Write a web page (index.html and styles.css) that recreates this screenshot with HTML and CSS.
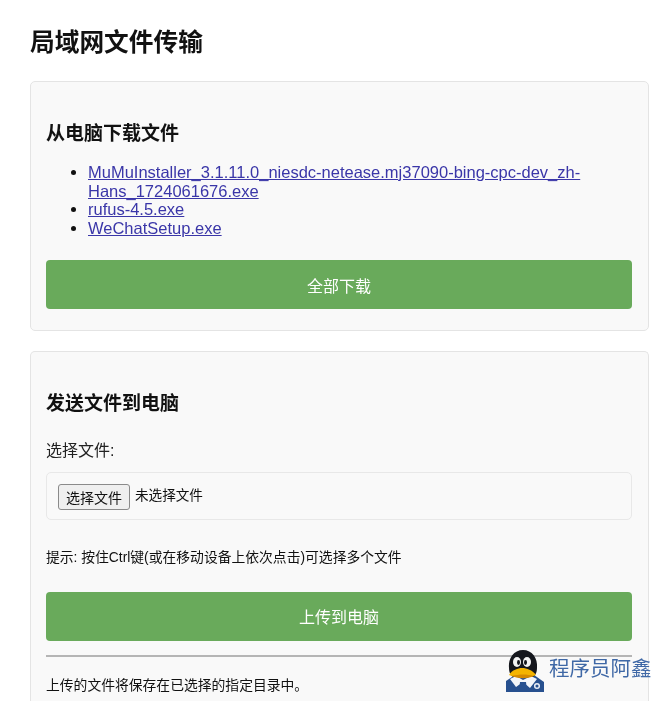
FILE: index.html
```html
<!DOCTYPE html>
<html>
<head>
    <meta charset="utf-8">
    <title>局域网文件传输</title>
    <link rel="stylesheet" href="styles.css">
</head>
<body>
    <h1 class="pageTitle">局域网文件传输</h1>

    <div class="card downloadCard">
        <h2>从电脑下载文件</h2>
        <ul class="fileList">
            <li><a href="#">MuMuInstaller_3.1.11.0_niesdc-netease.mj37090-bing-cpc-dev_zh-Hans_1724061676.exe</a></li>
            <li><a href="#">rufus-4.5.exe</a></li>
            <li><a href="#">WeChatSetup.exe</a></li>
        </ul>
        <button class="bigButton">全部下载</button>
    </div>

    <div class="card uploadCard">
        <h2>发送文件到电脑</h2>
        <label class="fileLabel">选择文件:</label>
        <div class="fileBox">
            <button class="fileButton">选择文件</button>
            <span class="fileStatus">未选择文件</span>
        </div>
        <p class="hint">提示: 按住Ctrl键(或在移动设备上依次点击)可选择多个文件</p>
        <button class="bigButton">上传到电脑</button>
        <hr class="divider">
        <p class="note">上传的文件将保存在已选择的指定目录中。</p>
    </div>

    <!-- watermark sits over the page -->
    <div class="watermark">
        <svg class="penguin" width="38" height="42" viewBox="0 0 38 42">
            <path d="M0 42V31L9 25H28L38 32V42Z" fill="#27508f"/>
            <path d="M3 18C2 8 8 0 17 0C26 0 32 8 31 18C31 24 28 27 25 28H9C6 27 3 24 3 18Z" fill="#15171d"/>
            <path d="M4 29L10 26L17 30L25 26L31 29L24 38L17 32L10 37Z" fill="#f3f5f9"/>
            <path d="M14 32H20L21 42H13Z" fill="#27508f"/>
            <ellipse cx="11" cy="12" rx="4" ry="5" fill="#f4f4f4"/>
            <ellipse cx="21" cy="12" rx="4" ry="5" fill="#f4f4f4"/>
            <ellipse cx="12.500" cy="12.500" rx="1.500" ry="2.400" fill="#15171d"/>
            <ellipse cx="19.500" cy="12.500" rx="1.500" ry="2.400" fill="#15171d"/>
            <path d="M3 25C6 20 12 18 16 18C21 18 26 20 30 25C24 28 9 28 3 25Z" fill="#f4b400"/>
            <path d="M6 26C13 24 21 24 28 26C21 29 13 29 6 26Z" fill="#d58a00"/>
            <circle cx="31" cy="36" r="2.300" fill="none" stroke="#e8edf5" stroke-width="1.500"/>
        </svg>
        <span class="watermarkText">程序员阿鑫</span>
    </div>
</body>
</html>
```

FILE: styles.css
```css
html, body {
    height: 701px;
    overflow: hidden;
}

body {
    font-family: "Liberation Sans", "Noto Sans CJK SC", sans-serif;
    font-size: 16.500px;
    line-height: 18.500px;
    color: #111;
    background-color: #fff;
    margin: 0;
    padding: 0 17px 0 30px;
    filter: blur(0.5px); /* the source picture is soft */
}

.pageTitle {
    font-size: 24.700px;
    line-height: 28px;
    margin: 29px 0 24px 0;
}

.card {
    box-sizing: border-box;
    background-color: #f9f9f9;
    border: 1px solid #e4e4e4;
    border-radius: 5px;
    padding: 0 16px 0 15px;
    margin-bottom: 20px;
}

.downloadCard {
    height: 250px;
}

/* runs off the bottom of the window */
.uploadCard {
    height: 350px;
    margin-bottom: 0;
    border-bottom: none;
    border-radius: 5px 5px 0 0;
}

h2 {
    font-size: 19px;
    line-height: 22px;
    margin: 41px 0 18px 0;
}

.fileList {
    margin: 0 0 23px 0;
    padding-left: 42px;
}

.fileList a {
    color: #3a36a8;
}

.bigButton {
    display: block;
    width: 100%;
    height: 49px;
    font-family: inherit;
    font-size: 16px;
    color: #fff;
    background-color: #69aa5b;
    border: none;
    border-radius: 4px;
}

.fileLabel {
    display: block;
    font-size: 16px;
    color: #222;
    margin-top: 27px;
}

.fileBox {
    display: flex;
    align-items: center;
    gap: 5px;
    height: 48px;
    box-sizing: border-box;
    margin-top: 11px;
    padding: 2px 0 0 11px;
    border: 1px solid #e8e8e8;
    border-radius: 5px;
}

.fileButton {
    width: 72px;
    height: 26px;
    padding: 0;
    font-family: inherit;
    font-size: 14px;
    color: #111;
    background-color: #efefef;
    border: 1px solid #8a8a8a;
    border-radius: 3px;
}

.fileStatus {
    font-size: 13.600px;
}

.hint {
    font-size: 13.800px;
    line-height: 16px;
    margin: 30px 0 26px 0;
}

.divider {
    height: 2px;
    margin: 14px 0 0 0;
    border: none;
    background-color: #b5b5b5;
}

.note {
    font-size: 13.800px;
    line-height: 16px;
    margin: 21px 0 0 0;
}

.watermark {
    position: absolute;
    left: 506px;
    top: 650px;
    display: flex;
    align-items: center;
    gap: 5px;
}

.penguin {
    display: block;
}

.watermarkText {
    font-size: 20.500px;
    line-height: 24px;
    color: #3f68a6;
    margin-top: -4px;
}
```
